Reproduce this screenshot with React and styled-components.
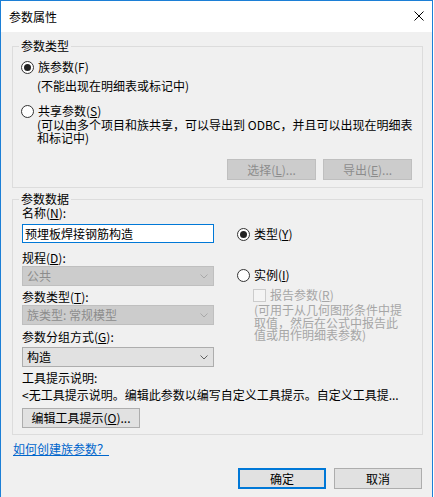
import React from 'react'
import styled, { createGlobalStyle } from 'styled-components'

const GlobalStyle = createGlobalStyle`
  html, body {
    margin: 0;
    padding: 0;
    background: #fff;
  }
  body {
    font-family: "Noto Sans CJK SC", "Noto Sans", sans-serif;
    font-size: 12px;
    color: #000;
  }
  * { box-sizing: border-box; }
`

const Window = styled.div`
  width: 433px;
  height: 497px;
  border: 1px solid #1c7fd6;
  border-bottom: none;
  background: #f0f0f0;
  display: flex;
  flex-direction: column;
`
const TitleBar = styled.div`
  height: 31px;
  background: #fff;
  display: flex;
  align-items: center;
  justify-content: space-between;
  padding: 0 8px 0 8px;
`
const Title = styled.div`
  font-size: 12px;
  line-height: 16px;
`
const Close = styled.div`
  width: 10px;
  height: 10px;
  display: flex;
  margin-top: -1px;
`
const Body = styled.div`
  flex: 1;
  padding: 7px 9px 0 11px;
  display: flex;
  flex-direction: column;
`
const Group = styled.fieldset`
  margin: ${p => p.$top || 0}px 0 0 0;
  border: 1px solid #dcdcdc;
  padding: ${p => p.$pt || 0}px 10px ${p => p.$pb || 0}px ${p => p.$pl || 8}px;
  min-width: 0;
`
const Legend = styled.legend`
  padding: 0 2px;
  margin-left: ${p => p.$ml || -2}px;
  line-height: 14px;
`
const RadioRow = styled.label`
  display: flex;
  align-items: center;
  height: 16px;
  line-height: 16px;
  margin-top: ${p => p.$top || 0}px;
  gap: 4px;
`
const RadioDot = styled.span`
  width: 13px;
  height: 13px;
  border-radius: 50%;
  border: 1px solid #333;
  background: #fff;
  display: flex;
  align-items: center;
  justify-content: center;
  flex: none;
  &::after {
    content: '';
    width: 7px;
    height: 7px;
    border-radius: 50%;
    background: #222;
    display: ${p => (p.$on ? 'block' : 'none')};
  }
`
const Note = styled.div`
  margin-top: ${p => p.$top || 0}px;
  margin-left: ${p => p.$indent || 0}px;
  line-height: ${p => p.$lh || 16}px;
  color: ${p => (p.$muted ? '#a6a6a6' : '#000')};
  white-space: nowrap;
`
const ButtonRow = styled.div`
  display: flex;
  justify-content: ${p => (p.$start ? 'flex-start' : 'flex-end')};
  gap: ${p => p.$gap || 8}px;
  margin-top: ${p => p.$top || 0}px;
  margin-right: ${p => p.$mr || 0}px;
`
const Button = styled.button`
  width: ${p => p.$w || 89}px;
  height: ${p => p.$h || 21}px;
  padding: 0;
  font: inherit;
  font-size: 12px;
  line-height: 16px;
  background: ${p => (p.disabled ? '#cccccc' : '#e1e1e1')};
  color: ${p => (p.disabled ? '#8c8c8c' : '#000')};
  border: ${p => (p.$primary ? '2px solid #0078d7' : p.disabled ? '1px solid #bfbfbf' : '1px solid #adadad')};
`
const DataRow = styled.div`
  display: flex;
  gap: 23px;
`
const LeftCol = styled.div`
  width: 192px;
  display: flex;
  flex-direction: column;
`
const RightCol = styled.div`
  display: flex;
  flex-direction: column;
`
const FieldLabel = styled.div`
  line-height: 14px;
  margin-top: ${p => p.$top || 0}px;
  white-space: nowrap;
`
const TextInput = styled.div`
  margin-top: 4px;
  height: 19px;
  border: 1px solid #0078d7;
  background: #fff;
  padding-left: 2px;
  line-height: 17px;
`
const Select = styled.div`
  margin-top: ${p => p.$top || 0}px;
  height: 20px;
  border: 1px solid ${p => (p.$disabled ? '#bfbfbf' : '#adadad')};
  background: ${p => (p.$disabled ? '#cccccc' : '#e1e1e1')};
  color: ${p => (p.$disabled ? '#8c8c8c' : '#000')};
  display: flex;
  align-items: center;
  justify-content: space-between;
  padding: 0 5px 0 4px;
  line-height: 18px;
  svg { display: block; }
`
const CheckRow = styled.div`
  display: flex;
  align-items: center;
  gap: 4px;
  margin-top: 5px;
  padding-left: 16px;
  line-height: 14px;
  color: #a6a6a6;
`
const CheckBox = styled.span`
  width: 13px;
  height: 13px;
  border: 1px solid #cccccc;
  background: #f4f4f4;
  flex: none;
`
const Link = styled.a`
  margin-top: 7px;
  align-self: flex-start;
  margin-left: 1px;
  line-height: 14px;
  color: #0066cc;
  text-decoration: underline;
`

const Chevron = ({ color }) => (
  <svg width="8" height="5" viewBox="0 0 8 5">
    <polyline points="0.5,0.5 4,4 7.5,0.5" fill="none" stroke={color} strokeWidth="1" />
  </svg>
)

const App = () => {
  return (
    <>
      <GlobalStyle />
      <Window>
        <TitleBar>
          <Title>参数属性</Title>
          <Close>
            <svg width="10" height="10" viewBox="0 0 10 10">
              <path d="M0.5 0.5 L9.5 9.5 M9.5 0.5 L0.5 9.5" stroke="#000" strokeWidth="1" fill="none" />
            </svg>
          </Close>
        </TitleBar>
        <Body>
          <Group $pt={6} $pb={7}>
            <Legend>参数类型</Legend>
            <RadioRow>
              <RadioDot $on />
              <span>族参数(F)</span>
            </RadioRow>
            <Note $top={3} $indent={16}>(不能出现在明细表或标记中)</Note>
            <RadioRow $top={9}>
              <RadioDot />
              <span>共享参数(<u>S</u>)</span>
            </RadioRow>
            <Note $indent={16} $lh={12.5}>
              (可以由多个项目和族共享，可以导出到 ODBC，并且可以出现在明细表
              <br />
              和标记中)
            </Note>
            <ButtonRow $top={15} $gap={7}>
              <Button disabled>选择(<u>L</u>)...</Button>
              <Button disabled>导出(<u>E</u>)...</Button>
            </ButtonRow>
          </Group>

          <Group $top={4} $pl={9} $pb={6}>
            <Legend $ml={-3}>参数数据</Legend>
            <DataRow>
              <LeftCol>
                <FieldLabel>名称(<u>N</u>):</FieldLabel>
                <TextInput>预埋板焊接钢筋构造</TextInput>
                <FieldLabel $top={8}>规程(<u>D</u>):</FieldLabel>
                <Select $top={1} $disabled>
                  <span>公共</span>
                  <Chevron color="#a8a8a8" />
                </Select>
                <FieldLabel $top={4}>参数类型(<u>T</u>):</FieldLabel>
                <Select $top={1} $disabled>
                  <span>族类型: 常规模型</span>
                  <Chevron color="#a8a8a8" />
                </Select>
                <FieldLabel $top={5}>参数分组方式(<u>G</u>):</FieldLabel>
                <Select $top={3}>
                  <span>构造</span>
                  <Chevron color="#606060" />
                </Select>
              </LeftCol>
              <RightCol>
                <RadioRow $top={20}>
                  <RadioDot $on />
                  <span>类型(<u>Y</u>)</span>
                </RadioRow>
                <RadioRow $top={25}>
                  <RadioDot />
                  <span>实例(<u>I</u>)</span>
                </RadioRow>
                <CheckRow>
                  <CheckBox />
                  <span>报告参数(<u>R</u>)</span>
                </CheckRow>
                <Note $top={2} $indent={17} $lh={12.5} $muted>
                  (可用于从几何图形条件中提
                  <br />
                  取值，然后在公式中报告此
                  <br />
                  值或用作明细表参数)
                </Note>
              </RightCol>
            </DataRow>
            <FieldLabel $top={4}>工具提示说明:</FieldLabel>
            <FieldLabel $top={3}>&lt;无工具提示说明。编辑此参数以编写自定义工具提示。自定义工具提...</FieldLabel>
            <ButtonRow $start $top={6}>
              <Button $w={118} $h={20}>编辑工具提示(<u>O</u>)...</Button>
            </ButtonRow>
          </Group>

          <Link href="#">如何创建族参数？</Link>

          <ButtonRow $top={12} $gap={8} $mr={1}>
            <Button $primary $w={88}>确定</Button>
            <Button $w={88}>取消</Button>
          </ButtonRow>
        </Body>
      </Window>
    </>
  )
}

export default App
